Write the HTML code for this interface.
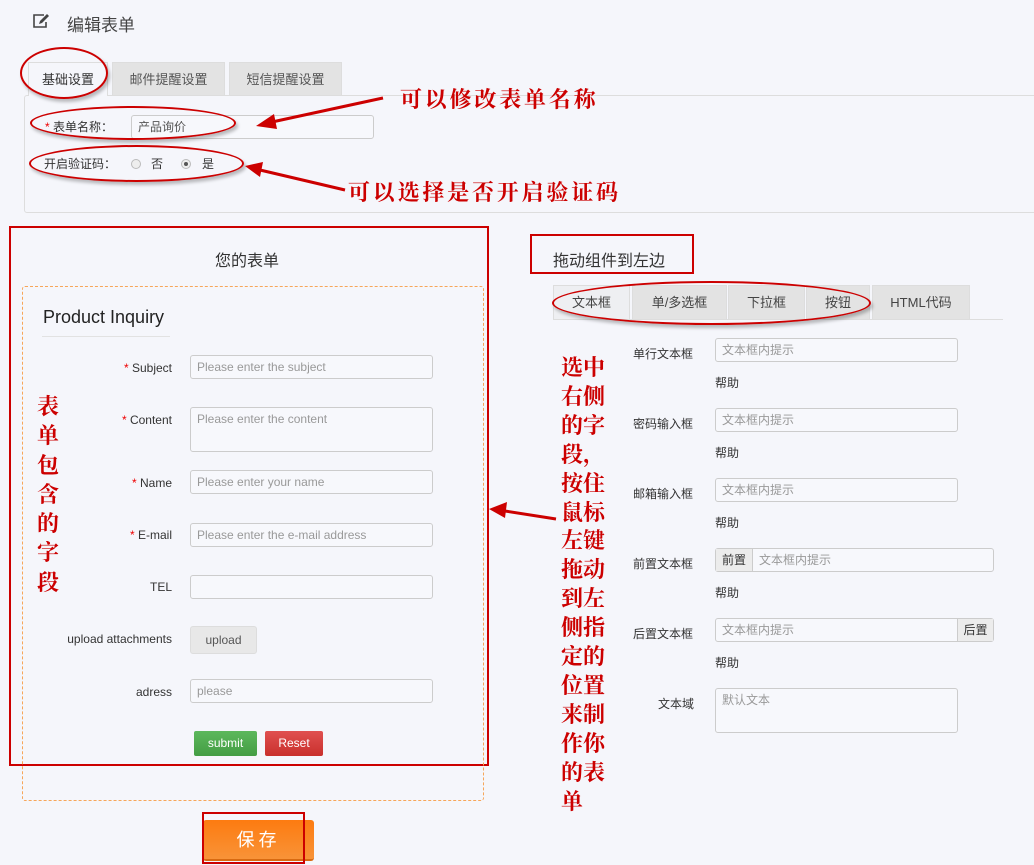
<!DOCTYPE html>
<html><head><meta charset="utf-8">
<style>
*{margin:0;padding:0;box-sizing:border-box}
body{width:1034px;height:865px;background:#f5f6fb;font-family:"Liberation Sans","Noto Sans CJK SC",sans-serif;color:#333;position:relative;overflow:hidden;font-size:12px}
.a{position:absolute}
.in{position:absolute;border:1px solid #ccc;border-radius:3px;background:#f7f8fc;color:#999;font-size:12px;padding:0 6px;line-height:22px;height:24px}
.lbl{position:absolute;font-size:12px;color:#333;text-align:right}
.star{color:#e00}
.tab{position:absolute;background:#e3e3e3;border:1px solid #ddd;border-bottom:none;font-size:13px;color:#555;text-align:center}
.red{color:#c00;font-family:"Noto Serif CJK SC","Liberation Serif",serif;font-weight:bold}
.ell{position:absolute;border:2px solid #c00;border-radius:50%;box-shadow:2px 3px 3px rgba(0,0,0,.25)}
.box{position:absolute;border:2px solid #c00}
.help{position:absolute;font-size:12px;color:#333}
</style></head><body>
<svg class="a" style="left:32px;top:13px" width="18" height="16" viewBox="0 0 18 16"><path d="M12 2H2v12h12V9" fill="none" stroke="#444" stroke-width="1.6"/><path d="M7 11l1-3 7-7 2 2-7 7z" fill="#444"/></svg>
<div class="a" style="left:67px;top:11px;font-size:17px;color:#444">编辑表单</div>

<div class="a" style="left:24px;top:95px;width:1020px;height:118px;border:1px solid #ddd;border-radius:3px"></div>
<div class="tab" style="left:28px;top:62px;width:80px;height:34px;line-height:33px;background:#f5f6fb;color:#333">基础设置</div>
<div class="tab" style="left:112px;top:62px;width:113px;height:33px;line-height:33px">邮件提醒设置</div>
<div class="tab" style="left:229px;top:62px;width:113px;height:33px;line-height:33px">短信提醒设置</div>
<div class="ell" style="left:20px;top:47px;width:88px;height:52px"></div>

<div class="lbl" style="left:45px;top:118px"><span class="star">*</span> 表单名称：</div>
<div class="in" style="left:131px;top:115px;width:243px;color:#555">产品询价</div>
<div class="ell" style="left:30px;top:106px;width:206px;height:34px"></div>
<div class="lbl" style="left:44px;top:155px">开启验证码：</div>
<div class="a" style="left:131px;top:159px;width:10px;height:10px;border:1px solid #bbb;border-radius:50%;background:#eee"></div>
<div class="a" style="left:151px;top:155px">否</div>
<div class="a" style="left:181px;top:159px;width:10px;height:10px;border:1px solid #bbb;border-radius:50%;background:#eee"><div class="a" style="left:2px;top:2px;width:4px;height:4px;border-radius:50%;background:#555"></div></div>
<div class="a" style="left:202px;top:155px">是</div>
<div class="ell" style="left:29px;top:145px;width:215px;height:37px"></div>

<div class="red a" style="left:400px;top:83px;font-size:22px;letter-spacing:2.8px;white-space:nowrap">可以修改表单名称</div>
<div class="red a" style="left:348px;top:176px;font-size:22px;letter-spacing:2.8px;white-space:nowrap">可以选择是否开启验证码</div>
<svg class="a" style="left:0;top:0" width="1034" height="865">
<g stroke="#c00" stroke-width="3" fill="#c00">
<line x1="383" y1="98" x2="272" y2="122"/><polygon points="256,126 274,114 277,129" stroke="none"/>
<line x1="345" y1="190" x2="260" y2="170"/><polygon points="245,166 263,162 260,177" stroke="none"/>
<line x1="556" y1="519" x2="505" y2="511"/><polygon points="489,509 507,502 505,518" stroke="none"/>
</g></svg>

<div class="box" style="left:9px;top:226px;width:480px;height:540px"></div>
<div class="a" style="left:0;top:247px;width:494px;text-align:center;font-size:16px;color:#333">您的表单</div>
<div class="a" style="left:22px;top:286px;width:462px;height:515px;border:1px dashed #f7a659;border-radius:3px"></div>
<div class="a" style="left:43px;top:307px;font-size:18px;color:#222">Product Inquiry</div>
<div class="a" style="left:42px;top:336px;width:128px;border-top:1px solid #e2e2e2"></div>

<div class="red a" style="left:37px;top:391px;font-size:22px;line-height:29.3px;width:24px">表单包含的字段</div>

<div class="lbl" style="left:60px;top:361px;width:112px"><span class="star">*</span> Subject</div>
<div class="in" style="left:190px;top:355px;width:243px">Please enter the subject</div>
<div class="lbl" style="left:60px;top:413px;width:112px"><span class="star">*</span> Content</div>
<div class="in" style="left:190px;top:407px;width:243px;height:45px">Please enter the content</div>
<div class="lbl" style="left:60px;top:476px;width:112px"><span class="star">*</span> Name</div>
<div class="in" style="left:190px;top:470px;width:243px">Please enter your name</div>
<div class="lbl" style="left:60px;top:528px;width:112px"><span class="star">*</span> E-mail</div>
<div class="in" style="left:190px;top:523px;width:243px">Please enter the e-mail address</div>
<div class="lbl" style="left:60px;top:580px;width:112px">TEL</div>
<div class="in" style="left:190px;top:575px;width:243px"></div>
<div class="lbl" style="left:40px;top:632px;width:132px">upload attachments</div>
<div class="a" style="left:190px;top:626px;width:67px;height:28px;border:1px solid #ddd;border-radius:3px;background:#e8e8e8;text-align:center;line-height:26px;color:#555">upload</div>
<div class="lbl" style="left:60px;top:685px;width:112px">adress</div>
<div class="in" style="left:190px;top:679px;width:243px">please</div>
<div class="a" style="left:194px;top:731px;width:63px;height:25px;border-radius:2px;background:linear-gradient(#5cb85c,#449d44);color:#fff;text-align:center;line-height:25px">submit</div>
<div class="a" style="left:265px;top:731px;width:58px;height:25px;border-radius:2px;background:linear-gradient(#e05050,#c9302c);color:#fff;text-align:center;line-height:25px">Reset</div>

<div class="a" style="left:203px;top:820px;width:111px;height:41px;border-radius:3px;background:linear-gradient(#fd7b10,#f89338);border-bottom:2px solid #d86a10;color:#fff;text-align:center;line-height:40px;font-size:18px;letter-spacing:4px">保存</div>
<div class="box" style="left:202px;top:812px;width:103px;height:52px"></div>

<div class="box" style="left:530px;top:234px;width:164px;height:40px"></div>
<div class="a" style="left:553px;top:247px;font-size:16px;color:#333">拖动组件到左边</div>
<div class="a" style="left:553px;top:319px;width:450px;border-top:1px solid #ddd"></div>
<div class="tab" style="left:553px;top:285px;width:77px;height:34px;line-height:33px;background:#eeeff2;color:#444">文本框</div>
<div class="tab" style="left:632px;top:285px;width:95px;height:34px;line-height:33px;color:#444">单/多选框</div>
<div class="tab" style="left:728px;top:285px;width:77px;height:34px;line-height:33px;color:#444">下拉框</div>
<div class="tab" style="left:806px;top:285px;width:64px;height:34px;line-height:33px;color:#444">按钮</div>
<div class="tab" style="left:872px;top:285px;width:98px;height:34px;line-height:33px;color:#444">HTML代码</div>
<div class="ell" style="left:552px;top:281px;width:319px;height:44px"></div>

<div class="red a" style="left:561px;top:353px;font-size:22px;line-height:28.9px;width:50px">选中右侧的字段，按住鼠标左键拖动到左侧指定的位置来制作你的表单</div>

<div class="lbl" style="left:633px;top:345px">单行文本框</div>
<div class="in" style="left:715px;top:338px;width:243px">文本框内提示</div>
<div class="help" style="left:715px;top:374px">帮助</div>
<div class="lbl" style="left:633px;top:415px">密码输入框</div>
<div class="in" style="left:715px;top:408px;width:243px">文本框内提示</div>
<div class="help" style="left:715px;top:444px">帮助</div>
<div class="lbl" style="left:633px;top:485px">邮箱输入框</div>
<div class="in" style="left:715px;top:478px;width:243px">文本框内提示</div>
<div class="help" style="left:715px;top:514px">帮助</div>
<div class="lbl" style="left:633px;top:555px">前置文本框</div>
<div class="in" style="left:715px;top:548px;width:279px;padding:0"><span style="display:inline-block;width:37px;height:22px;background:#ececec;border-right:1px solid #ccc;text-align:center;color:#333">前置</span><span style="padding-left:6px">文本框内提示</span></div>
<div class="help" style="left:715px;top:584px">帮助</div>
<div class="lbl" style="left:633px;top:625px">后置文本框</div>
<div class="in" style="left:715px;top:618px;width:279px;padding:0 0 0 6px">文本框内提示<span style="position:absolute;right:0;top:0;width:36px;height:22px;background:#ececec;border-left:1px solid #ccc;text-align:center;color:#333">后置</span></div>
<div class="help" style="left:715px;top:654px">帮助</div>
<div class="lbl" style="left:658px;top:695px">文本域</div>
<div class="in" style="left:715px;top:688px;width:243px;height:45px">默认文本</div>
</body></html>
